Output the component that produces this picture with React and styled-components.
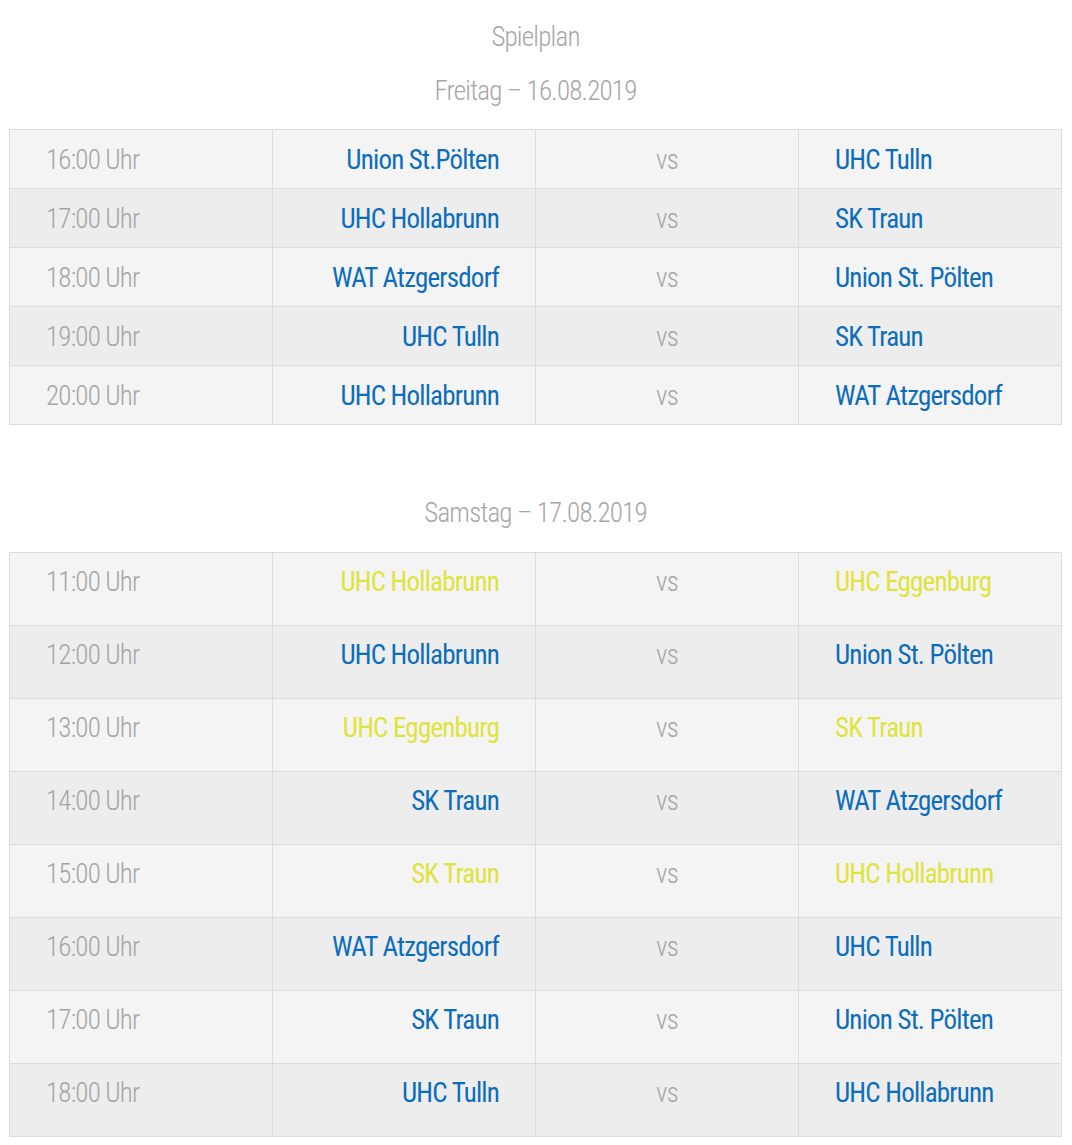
import React from "react";
import styled, { createGlobalStyle } from "styled-components";

const FONT = `"Roboto Condensed", "Liberation Sans Narrow", "DejaVu Sans Condensed", sans-serif`;

const GlobalStyle = createGlobalStyle`
  body {
    margin: 0;
    background: #ffffff;
    font-family: ${FONT};
    font-stretch: condensed;
  }
`;

export default function App() {
  return (
    <Page>
      <GlobalStyle />
      <Heading>Spielplan</Heading>
      <Heading>Freitag – 16.08.2019</Heading>
      <Table>
        {friday.map((game, i) => (
          <Row key={i} even={i % 2 === 1}>
            <TimeCell>{game.time} Uhr</TimeCell>
            <HomeCell>
              <Team yellow={game.yellow}>{game.home}</Team>
            </HomeCell>
            <VsCell>vs</VsCell>
            <AwayCell>
              <Team yellow={game.yellow}>{game.away}</Team>
            </AwayCell>
          </Row>
        ))}
      </Table>

      <Heading spaced>Samstag – 17.08.2019</Heading>
      <Table>
        {saturday.map((game, i) => (
          <Row key={i} even={i % 2 === 1} tall>
            <TimeCell>{game.time} Uhr</TimeCell>
            <HomeCell>
              <Team yellow={game.yellow}>{game.home}</Team>
            </HomeCell>
            <VsCell>vs</VsCell>
            <AwayCell>
              <Team yellow={game.yellow}>{game.away}</Team>
            </AwayCell>
          </Row>
        ))}
      </Table>
    </Page>
  );
}

const friday = [
  { time: "16:00", home: "Union St.Pölten", away: "UHC Tulln" },
  { time: "17:00", home: "UHC Hollabrunn", away: "SK Traun" },
  { time: "18:00", home: "WAT Atzgersdorf", away: "Union St. Pölten" },
  { time: "19:00", home: "UHC Tulln", away: "SK Traun" },
  { time: "20:00", home: "UHC Hollabrunn", away: "WAT Atzgersdorf" },
];

const saturday = [
  { time: "11:00", home: "UHC Hollabrunn", away: "UHC Eggenburg", yellow: true },
  { time: "12:00", home: "UHC Hollabrunn", away: "Union St. Pölten" },
  { time: "13:00", home: "UHC Eggenburg", away: "SK Traun", yellow: true },
  { time: "14:00", home: "SK Traun", away: "WAT Atzgersdorf" },
  { time: "15:00", home: "SK Traun", away: "UHC Hollabrunn", yellow: true },
  { time: "16:00", home: "WAT Atzgersdorf", away: "UHC Tulln" },
  { time: "17:00", home: "SK Traun", away: "Union St. Pölten" },
  { time: "18:00", home: "UHC Tulln", away: "UHC Hollabrunn" },
];

const Page = styled.div`
  padding: 10px 10px 8px 9px;
`;

const Heading = styled.h2`
  margin: ${(p) => (p.spaced ? "61px 0 12px" : "0")};
  font-size: 27px;
  font-weight: 300;
  line-height: 54px;
  letter-spacing: -0.8px;
  text-align: center;
  color: #a6a6a6;
`;

const Table = styled.div`
  width: 1051px;
  margin-top: 11px;
  border: 1px solid #dcdcdc;
`;

const Cell = styled.div`
  display: flex;
  align-items: center;
  padding-top: 3px;
  font-size: 27px;
  line-height: 1;
  letter-spacing: -0.8px;
`;

const Row = styled.div`
  display: grid;
  grid-template-columns: 262px 263px 263px 263px;
  height: ${(p) => (p.tall ? "72px" : "58px")};
  background: ${(p) => (p.even ? "#ededed" : "#f4f4f4")};
  border-top: 1px solid #dcdcdc;

  &:first-child {
    border-top: none;
  }

  ${Cell} {
    padding-bottom: ${(p) => (p.tall ? "16px" : "0")};
  }
`;

const TimeCell = styled(Cell)`
  padding-left: 36px;
  color: #a5a5a5;
  font-weight: 300;
`;

const HomeCell = styled(Cell)`
  justify-content: flex-end;
  padding-right: 36px;
  border-left: 1px solid #dcdcdc;
`;

const VsCell = styled(Cell)`
  justify-content: center;
  border-left: 1px solid #dcdcdc;
  color: #a5a5a5;
  font-weight: 300;
`;

const AwayCell = styled(Cell)`
  padding-left: 36px;
  border-left: 1px solid #dcdcdc;
`;

const Team = styled.span`
  color: ${(p) => (p.yellow ? "#dfe33c" : "#0b6dbb")};
  font-weight: 400;
`;
